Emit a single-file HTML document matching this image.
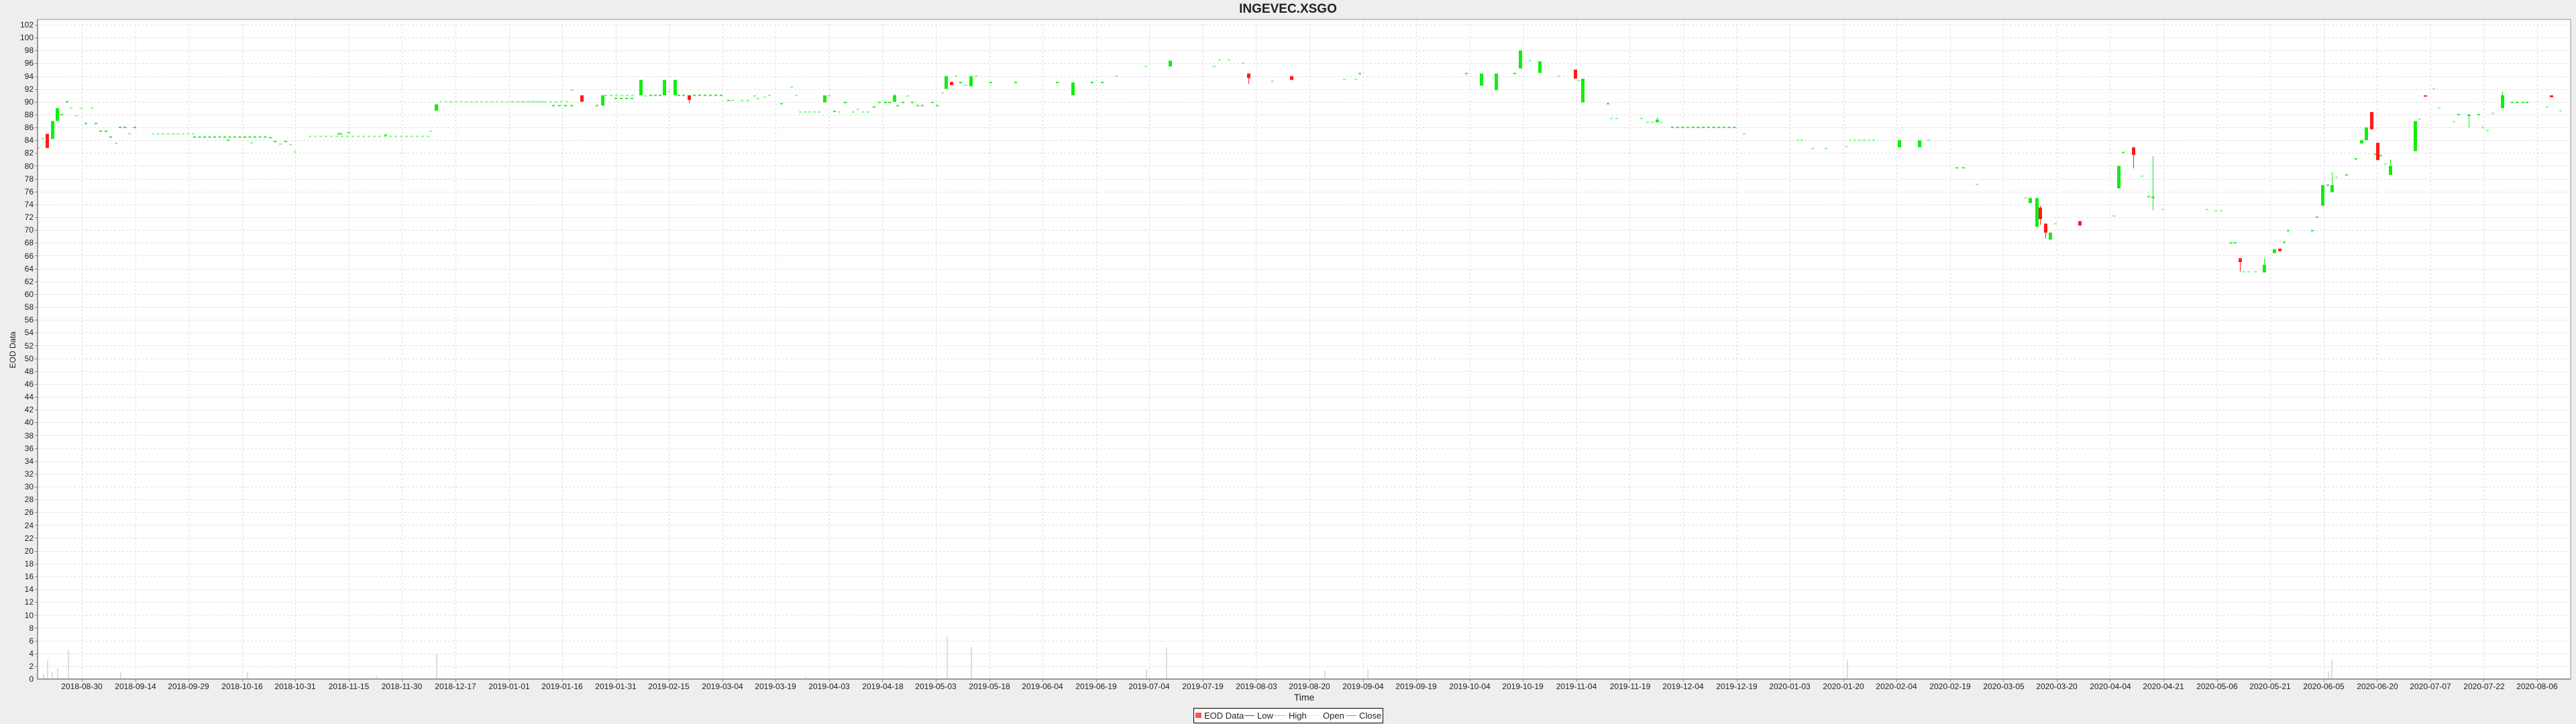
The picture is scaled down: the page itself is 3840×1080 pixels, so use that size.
<!DOCTYPE html>
<html><head><meta charset="utf-8"><style>
html,body{margin:0;padding:0;background:#eeeeee;width:3840px;height:1080px;overflow:hidden}
svg{display:block}
text{font-family:"Liberation Sans",sans-serif;fill:#222}
</style></head><body>
<svg id="s" width="3840" height="1080" xmlns="http://www.w3.org/2000/svg">
<rect x="0" y="0" width="3840" height="1080" fill="#eeeeee"/>
<text x="1920" y="19" font-size="19" font-weight="bold" text-anchor="middle" fill="#000">INGEVEC.XSGO</text>
<rect x="56" y="29" width="3776" height="984" fill="#ffffff" stroke="#b4b4b4" stroke-width="1.5"/>
<g id="grid"></g>
<g id="vol"></g>
<g id="data"></g>
<line x1="56" y1="29" x2="56" y2="1013" stroke="#888" stroke-width="1.5"/>
<line x1="56" y1="1013" x2="3832" y2="1013" stroke="#888" stroke-width="1.5"/>
<g font-size="12" text-anchor="end">
<text x="50" y="41">102</text><text x="50" y="60">100</text><text x="50" y="79">98</text><text x="50" y="98">96</text><text x="50" y="118">94</text><text x="50" y="137">92</text><text x="50" y="156">90</text><text x="50" y="175">88</text><text x="50" y="194">86</text><text x="50" y="213">84</text><text x="50" y="232">82</text><text x="50" y="252">80</text><text x="50" y="271">78</text><text x="50" y="290">76</text><text x="50" y="309">74</text><text x="50" y="328">72</text><text x="50" y="347">70</text><text x="50" y="366">68</text><text x="50" y="386">66</text><text x="50" y="405">64</text><text x="50" y="424">62</text><text x="50" y="443">60</text><text x="50" y="462">58</text><text x="50" y="481">56</text><text x="50" y="500">54</text><text x="50" y="520">52</text><text x="50" y="539">50</text><text x="50" y="558">48</text><text x="50" y="577">46</text><text x="50" y="596">44</text><text x="50" y="615">42</text><text x="50" y="634">40</text><text x="50" y="654">38</text><text x="50" y="673">36</text><text x="50" y="692">34</text><text x="50" y="711">32</text><text x="50" y="730">30</text><text x="50" y="749">28</text><text x="50" y="768">26</text><text x="50" y="788">24</text><text x="50" y="807">22</text><text x="50" y="826">20</text><text x="50" y="845">18</text><text x="50" y="864">16</text><text x="50" y="883">14</text><text x="50" y="902">12</text><text x="50" y="922">10</text><text x="50" y="941">8</text><text x="50" y="960">6</text><text x="50" y="979">4</text><text x="50" y="998">2</text><text x="50" y="1017">0</text>
</g>
<g font-size="12" text-anchor="middle">
<text x="122" y="1028">2018-08-30</text><text x="202" y="1028">2018-09-14</text><text x="281" y="1028">2018-09-29</text><text x="361" y="1028">2018-10-16</text><text x="440" y="1028">2018-10-31</text><text x="520" y="1028">2018-11-15</text><text x="599" y="1028">2018-11-30</text><text x="679" y="1028">2018-12-17</text><text x="759" y="1028">2019-01-01</text><text x="838" y="1028">2019-01-16</text><text x="918" y="1028">2019-01-31</text><text x="997" y="1028">2019-02-15</text><text x="1077" y="1028">2019-03-04</text><text x="1156" y="1028">2019-03-19</text><text x="1236" y="1028">2019-04-03</text><text x="1316" y="1028">2019-04-18</text><text x="1395" y="1028">2019-05-03</text><text x="1475" y="1028">2019-05-18</text><text x="1554" y="1028">2019-06-04</text><text x="1634" y="1028">2019-06-19</text><text x="1713" y="1028">2019-07-04</text><text x="1793" y="1028">2019-07-19</text><text x="1873" y="1028">2019-08-03</text><text x="1952" y="1028">2019-08-20</text><text x="2032" y="1028">2019-09-04</text><text x="2111" y="1028">2019-09-19</text><text x="2191" y="1028">2019-10-04</text><text x="2270" y="1028">2019-10-19</text><text x="2350" y="1028">2019-11-04</text><text x="2430" y="1028">2019-11-19</text><text x="2509" y="1028">2019-12-04</text><text x="2589" y="1028">2019-12-19</text><text x="2668" y="1028">2020-01-03</text><text x="2748" y="1028">2020-01-20</text><text x="2827" y="1028">2020-02-04</text><text x="2907" y="1028">2020-02-19</text><text x="2987" y="1028">2020-03-05</text><text x="3066" y="1028">2020-03-20</text><text x="3146" y="1028">2020-04-04</text><text x="3225" y="1028">2020-04-21</text><text x="3305" y="1028">2020-05-06</text><text x="3384" y="1028">2020-05-21</text><text x="3464" y="1028">2020-06-05</text><text x="3544" y="1028">2020-06-20</text><text x="3623" y="1028">2020-07-07</text><text x="3703" y="1028">2020-07-22</text><text x="3782" y="1028">2020-08-06</text>
</g>
<text x="1944" y="1045" font-size="14" text-anchor="middle">Time</text>
<text transform="translate(23,522) rotate(-90)" font-size="12" text-anchor="middle">EOD Data</text>
<rect x="1779.5" y="1056.5" width="282" height="22" fill="#fff" stroke="#000" stroke-width="1"/>
<rect x="1782" y="1063" width="9" height="8" fill="#ff5555"/>
<text x="1795" y="1072" font-size="13">EOD Data</text>
<line x1="1855" y1="1067.5" x2="1870" y2="1067.5" stroke="#4444ff"/>
<text x="1874" y="1072" font-size="13">Low</text>
<line x1="1899" y1="1067.5" x2="1917" y2="1067.5" stroke="#55ff55"/>
<text x="1921" y="1072" font-size="13">High</text>
<line x1="1949" y1="1067.5" x2="1967" y2="1067.5" stroke="#ffff55"/>
<text x="1972" y="1072" font-size="13">Open</text>
<line x1="2006" y1="1067.5" x2="2022" y2="1067.5" stroke="#ff55ff"/>
<text x="2026" y="1072" font-size="13">Close</text>
</svg>
<script>
(function(){
var NS="http://www.w3.org/2000/svg";
function Y(v){return 1013-v*9.569;}
function el(p,t,a){var e=document.createElementNS(NS,t);for(var k in a)e.setAttribute(k,a[k]);p.appendChild(e);return e;}
var g=document.getElementById("grid");
for(var v=2;v<=102;v+=2){var y=Math.round(Y(v))+0.5;el(g,"line",{x1:56,x2:3832,y1:y,y2:y,stroke:"#dcdcdc","stroke-dasharray":"3,3"});el(g,"line",{x1:52,x2:56,y1:y,y2:y,stroke:"#888"});}
for(var i=0;i<47;i++){var x=Math.round(122+79.565*i)+0.5;el(g,"line",{x1:x,x2:x,y1:29,y2:1013,stroke:"#dcdcdc","stroke-dasharray":"3,3"});el(g,"line",{x1:x,x2:x,y1:1013,y2:1017,stroke:"#888"});}
var vg=document.getElementById("vol");
[[64,.8],[70,3],[77,1.1],[85,1.7],[101,4.5],[179,1.1],[368,1.1],[650,4],[1411,6.6],[1447,5],[1708,1.5],[1738,4.9],[1974,1.3],[2038,1.5],[2753,3],[3475,3],[3470,1.2],[560,.5],[1200,.4]].forEach(function(b){el(vg,"rect",{x:b[0],y:Y(b[1]),width:2,height:1013-Y(b[1]),fill:"#dddddd"});});
var d=document.getElementById("data");
function dash(x,v,lt){el(d,"rect",{x:x-2,y:Y(v)-1,width:4,height:2,fill:lt?"#7dff7d":"#22f022"});}
function cand(x,a,b,red,wl,wh){var t=Math.max(a,b),bo=Math.min(a,b),c=red?"#ff1a1a":"#11ee11";
 if(wl!=null||wh!=null){el(d,"line",{x1:x+0.5,x2:x+0.5,y1:Y(wh!=null?wh:t),y2:Y(wl!=null?wl:bo),stroke:c});}
 el(d,"rect",{x:x-2,y:Y(t),width:5,height:Math.max(2,Y(bo)-Y(t)),fill:c});}
function run(x1,x2,v,step,lt){for(var x=x1;x<=x2;x+=step)dash(x,v,lt);}
dash(57,82.8,1);dash(64,84.3,1);cand(70,85,82.8,1);cand(78,87,84.2,0);cand(85,89,87,0);dash(92,88);
dash(100,90);dash(106,89,1);dash(114,87.8,1);dash(121,89,1);dash(128,86.6);dash(137,89,1);dash(143,86.6);
dash(150,85.4);dash(158,85.4);dash(165,84.5);dash(173,83.5,1);dash(179,86);dash(186,86);dash(193,85,1);dash(201,86);
run(228,290,85,7.5,1);run(290,400,84.5,7.5,0);dash(340,84,0);dash(375,83.6,1);
dash(403,84.4);dash(410,83.8);dash(418,83.4,1);dash(426,83.8);dash(433,83.3,1);dash(440,82.2,1);
run(462,640,84.6,8,1);dash(505,85);dash(508,85);dash(520,85.2);dash(575,84.8);dash(642,85.4,1);
cand(650,89.6,88.6,0);run(657,810,90,7.6,1);run(765,850,90,8,1);
run(825,860,89.4,9,0);dash(853,91.8,1);cand(867,91,90,1);dash(890,89.4);cand(898,91,89.4,0);
run(903,945,91,8,1);run(918,945,90.5,8,0);cand(955,93.4,91,0,91,93.4);dash(962,90.9,1);run(970,985,91,7,0);
cand(990,93.4,91,0);dash(997,91.6,1);cand(1006,93.4,91,0);run(1012,1020,91,7,0);cand(1027,91,90.3,1,89.8);
run(1035,1080,91,8,0);dash(1086,90.2);dash(1092,90.2,1);dash(1106,90.2,1);dash(1115,90.2,1);dash(1125,90.9,1);
dash(1130,90.5,1);dash(1140,90.7,1);dash(1147,91,1);dash(1165,89.7);dash(1180,92.3,1);dash(1187,91,1);
run(1193,1222,88.4,7,1);cand(1229,91,89.9,0);dash(1236,91,1);dash(1244,88.5);dash(1251,88.4,1);dash(1260,89.9);
dash(1272,88.4,1);dash(1279,88.8,1);dash(1287,88.4,1);dash(1294,88.4,1);dash(1303,89.2);dash(1311,89.9);dash(1320,89.9);dash(1326,89.9);
cand(1333,91,90,0,90,91.2);dash(1338,89.4);dash(1346,89.9);dash(1353,90.9,1);dash(1360,89.9);dash(1368,89.4);dash(1375,89.4);dash(1390,89.9);dash(1397,89.4);
dash(1405,91.4,1);cand(1410,94,92,0);cand(1418,93.1,92.6,1);dash(1425,94,1);dash(1432,93);dash(1440,92.6,1);cand(1447,94,92.4,0);dash(1455,94,1);dash(1477,93);
dash(1514,93);dash(1576,93);cand(1599,93,91,0);dash(1628,93);dash(1643,93);dash(1664,94,1);dash(1708,95.5,1);cand(1744,96.4,95.5,0);
dash(1810,95.5,1);dash(1818,96.5,1);dash(1832,96.5,1);dash(1853,96,1);cand(1861,94.4,93.7,1,92.8);dash(1897,93.2,1);cand(1925,94,93.4,1);
dash(2004,93.5,1);dash(2021,93.5,1);dash(2027,94.4);dash(2186,94.4);cand(2208,94.4,92.5,0);cand(2230,94.4,91.8,0);dash(2258,94.4);
cand(2266,98,95.2,0);dash(2281,96.4,1);cand(2295,96.3,94.5,0);dash(2324,94,1);cand(2348,95,93.6,1);dash(2354,93.3,1);cand(2359,93.6,89.9,0);
dash(2397,89.7);dash(2402,87.4,1);dash(2410,87.4,1);dash(2447,87.4,1);dash(2456,86.8,1);dash(2463,86.8,1);cand(2470,87.2,86.8,0,86.8,87.6);dash(2476,86.8,1);
run(2493,2590,86,7.7,0);
dash(2600,85,1);dash(2680,84,1);dash(2686,84,1);dash(2702,82.7,1);dash(2722,82.7,1);dash(2752,83,1);run(2758,2796,84,7,1);
cand(2831,84,82.9,0);cand(2861,84,82.9,0);dash(2875,84,1);dash(2917,79.7);dash(2927,79.7);dash(2947,77.1,1);
dash(3019,75,1);cand(3026,75,74.2,0);cand(3036,75,70.5,0);cand(3041,73.5,71.7,1,70.8,73.8);cand(3049,71,69.6,1,68.7);cand(3056,69.6,68.5,0);dash(3064,71,1);
cand(3100,71.4,70.7,1);dash(3151,72.2,1);cand(3158,80,76.5,0);dash(3165,82.1);cand(3180,82.9,81.7,1,79.6);
dash(3193,78.4,1);dash(3203,75.2);cand(3209,75.2,75,0,73.1,81.5);dash(3224,73.2,1);
dash(3290,73.2,1);dash(3303,73,1);dash(3311,73,1);dash(3326,68);dash(3332,68);
cand(3339,65.6,65,1,63.5);dash(3345,63.5,1);dash(3352,63.5,1);dash(3362,63.5,1);cand(3375,64.6,63.4,0,63.4,65.6);
cand(3390,67,66.4,0);cand(3398,67.1,66.7,1);dash(3405,68.1);dash(3411,69.9);dash(3447,69.9);dash(3454,72);
cand(3462,77,73.8,0);dash(3470,77,0);cand(3476,77,75.9,0,75.9,79);dash(3483,78.2,1);dash(3498,78.6);
dash(3512,81.1);cand(3520,84,83.5,0);cand(3527,86,84,0);cand(3535,88.4,85.7,1);dash(3541,81.8);cand(3544,83.6,80.9,1);dash(3549,81.6);
dash(3556,80.3,1);cand(3563,80,78.6,0,78.6,81);cand(3600,87,82.3,0);dash(3607,87.3,1);
cand(3615,91,90.8,1);dash(3628,92,1);dash(3636,89,1);dash(3658,86.9,1);dash(3665,88);cand(3680,88,88,0,86,88);
dash(3695,88);dash(3701,86,1);dash(3708,85.5,1);dash(3716,88.2,1);cand(3730,91,89,0,89,91.6);
dash(3745,89.9);dash(3752,89.9);dash(3761,89.9);dash(3767,89.9);dash(3797,89.2,1);cand(3803,91,90.7,1);dash(3817,88.6,1);
})();
</script>
</body></html>
